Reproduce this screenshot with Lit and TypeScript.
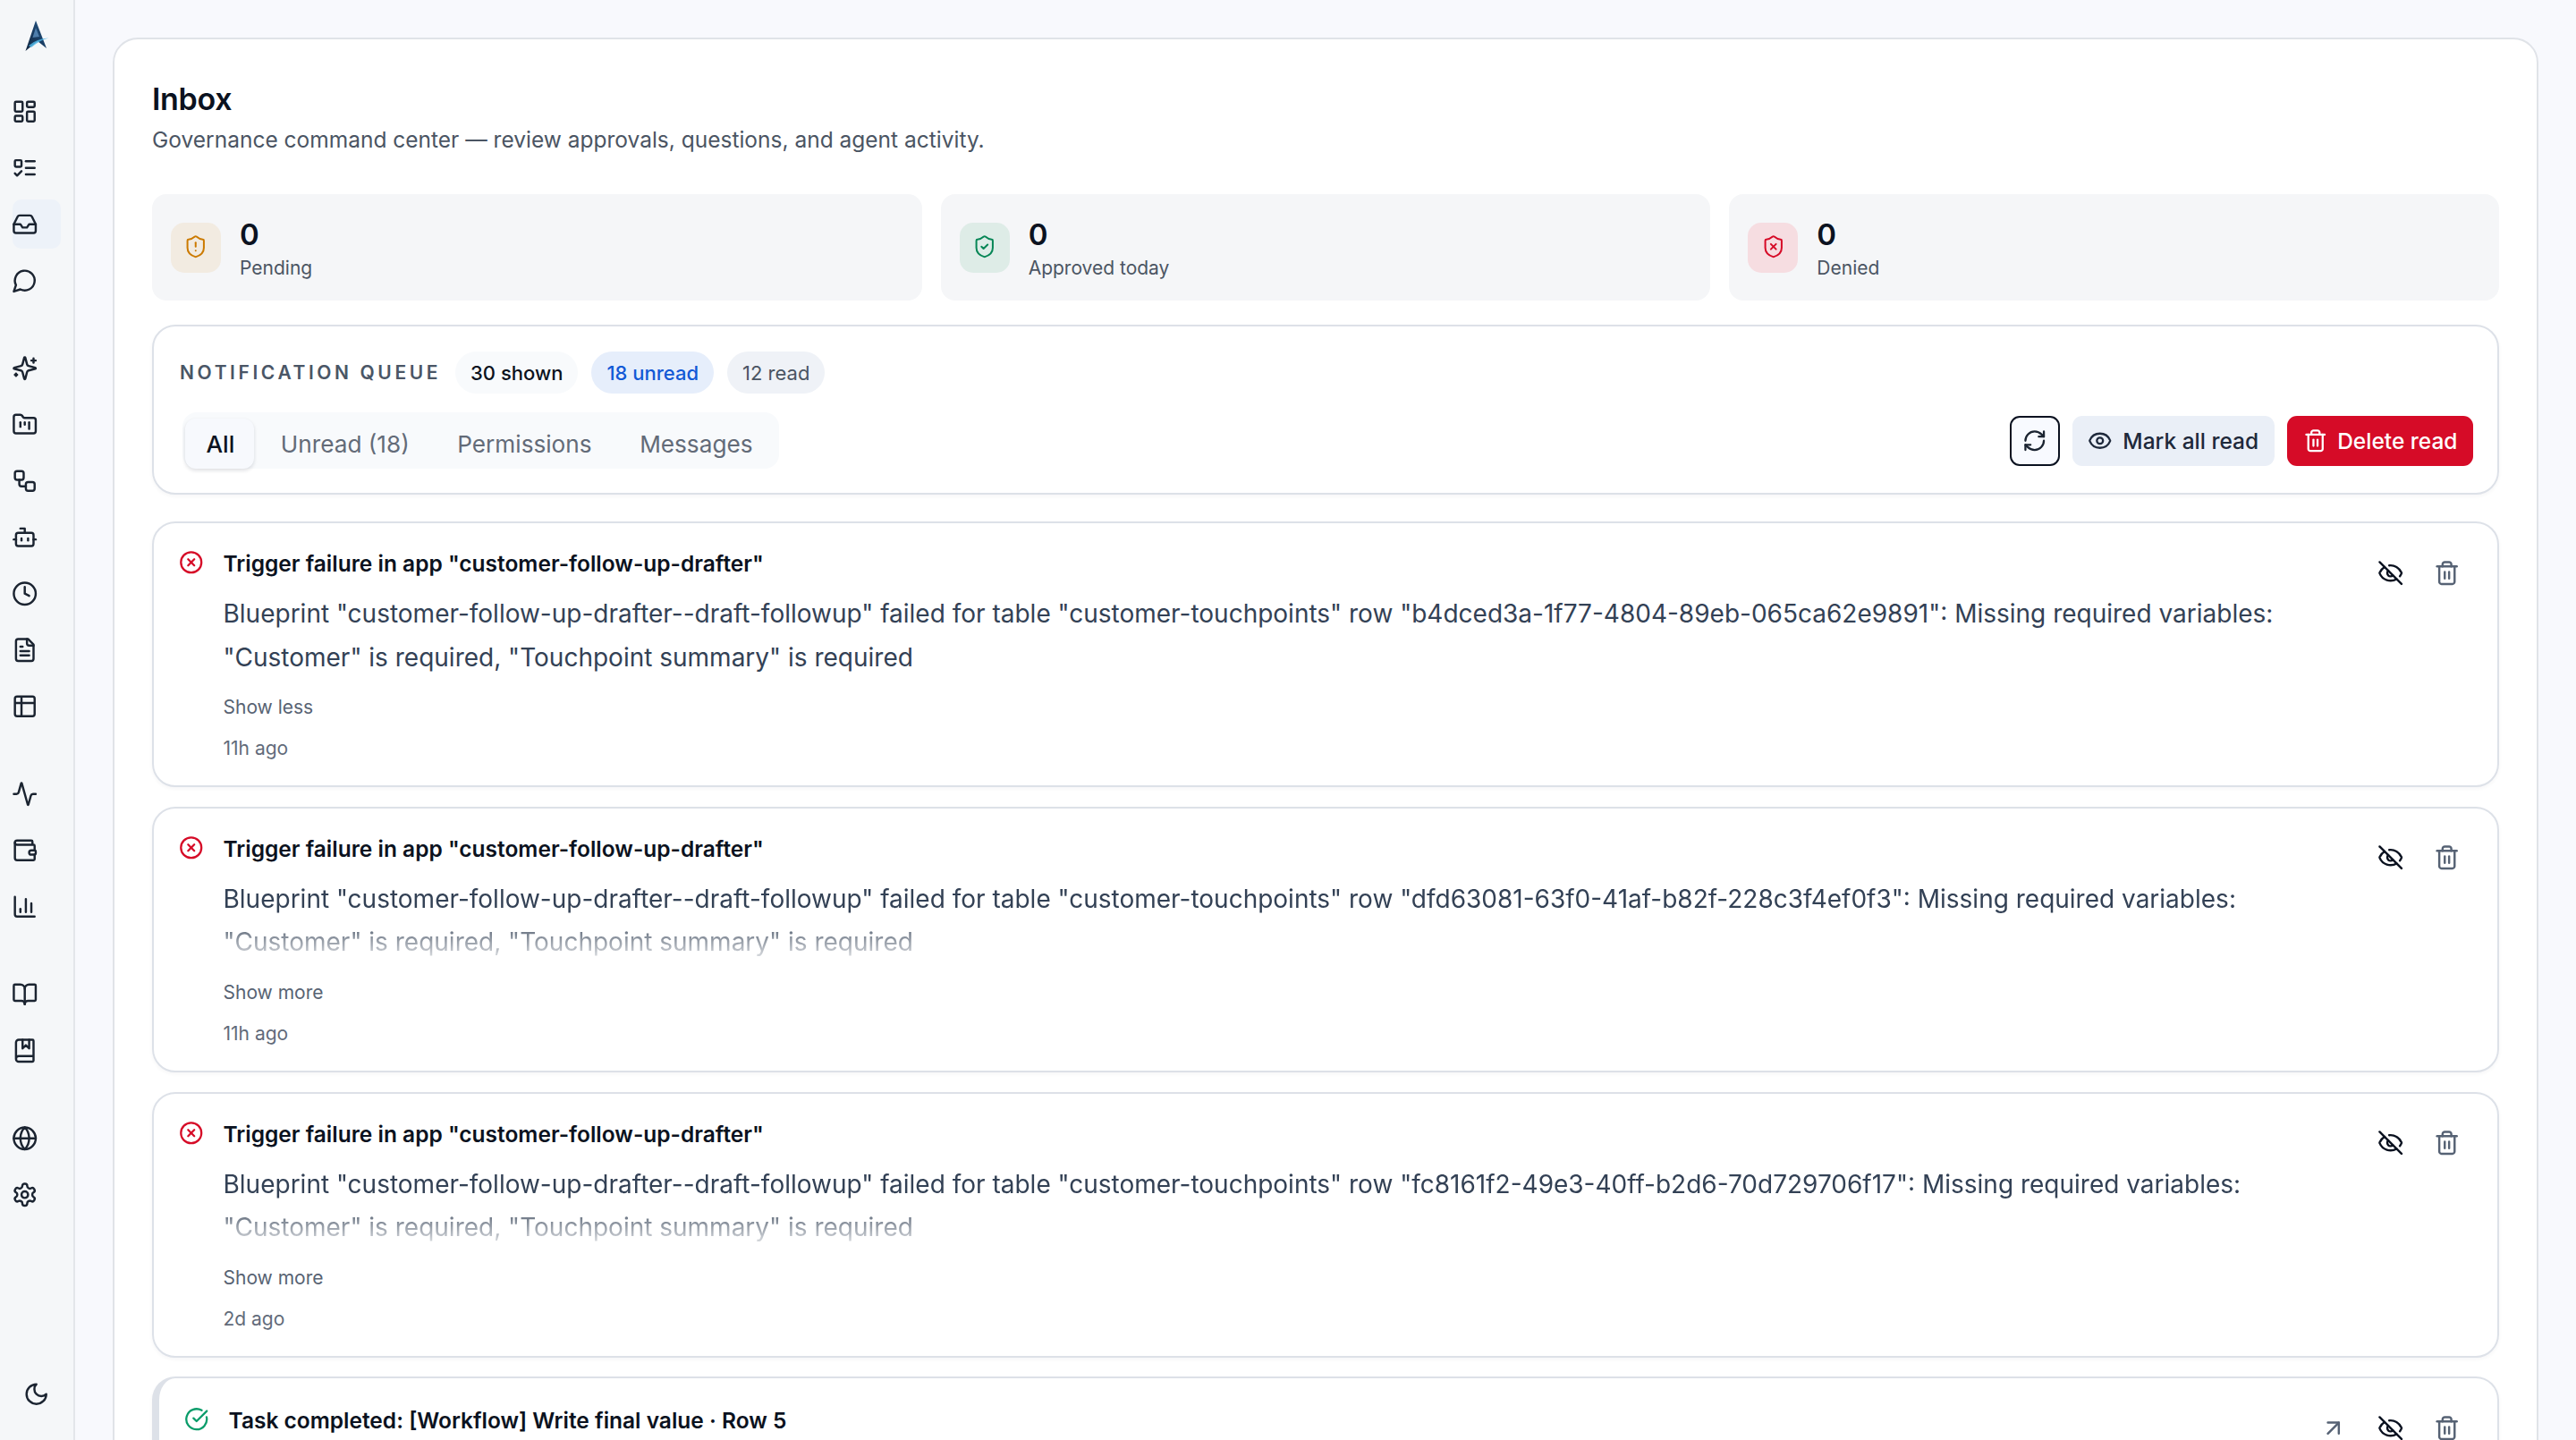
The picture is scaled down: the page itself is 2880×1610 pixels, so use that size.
import { LitElement, html, css, svg } from 'lit';
import { customElement } from 'lit/decorators.js';

const paths: Record<string, unknown> = {
  dashboard: svg`<rect x="3" y="3" width="7" height="9" rx="1"/><rect x="14" y="3" width="7" height="5" rx="1"/><rect x="14" y="12" width="7" height="9" rx="1"/><rect x="3" y="16" width="7" height="5" rx="1"/>`,
  todo: svg`<rect x="3" y="5" width="6" height="6" rx="1"/><path d="m3 17 2 2 4-4"/><path d="M13 6h8"/><path d="M13 12h8"/><path d="M13 18h8"/>`,
  inbox: svg`<polyline points="22 12 16 12 14 15 10 15 8 12 2 12"/><path d="M5.45 5.11 2 12v6a2 2 0 0 0 2 2h16a2 2 0 0 0 2-2v-6l-3.45-6.89A2 2 0 0 0 16.76 4H7.24a2 2 0 0 0-1.79 1.11z"/>`,
  chat: svg`<path d="M7.9 20A9 9 0 1 0 4 16.1L2 22Z"/>`,
  sparkles: svg`<path d="M9.937 15.5A2 2 0 0 0 8.5 14.063l-6.135-1.582a.5.5 0 0 1 0-.962L8.5 9.936A2 2 0 0 0 9.937 8.5l1.582-6.135a.5.5 0 0 1 .963 0L14.063 8.5A2 2 0 0 0 15.5 9.937l6.135 1.581a.5.5 0 0 1 0 .964L15.5 14.063a2 2 0 0 0-1.437 1.437l-1.582 6.135a.5.5 0 0 1-.963 0z"/><path d="M20 3v4"/><path d="M22 5h-4"/><path d="M4 17v2"/><path d="M5 18H3"/>`,
  folder: svg`<path d="M4 20h16a2 2 0 0 0 2-2V8a2 2 0 0 0-2-2h-7.93a2 2 0 0 1-1.66-.9l-.82-1.2A2 2 0 0 0 7.93 3H4a2 2 0 0 0-2 2v13c0 1.1.9 2 2 2Z"/><path d="M8 10v4"/><path d="M12 10v2"/><path d="M16 10v6"/>`,
  workflow: svg`<rect x="3" y="3" width="8" height="8" rx="2"/><path d="M7 11v4a2 2 0 0 0 2 2h4"/><rect x="13" y="13" width="8" height="8" rx="2"/>`,
  bot: svg`<path d="M12 8V4H8"/><rect x="4" y="8" width="16" height="12" rx="2"/><path d="M2 14h2"/><path d="M20 14h2"/><path d="M15 13v2"/><path d="M9 13v2"/>`,
  clock: svg`<circle cx="12" cy="12" r="10"/><polyline points="12 6 12 12 16 14"/>`,
  file: svg`<path d="M15 2H6a2 2 0 0 0-2 2v16a2 2 0 0 0 2 2h12a2 2 0 0 0 2-2V7Z"/><path d="M14 2v4a2 2 0 0 0 2 2h4"/><path d="M10 9H8"/><path d="M16 13H8"/><path d="M16 17H8"/>`,
  table: svg`<path d="M9 3H5a2 2 0 0 0-2 2v4m6-6h10a2 2 0 0 1 2 2v4M9 3v18m0 0h10a2 2 0 0 0 2-2V9M9 21H5a2 2 0 0 1-2-2V9m0 0h18"/>`,
  activity: svg`<path d="M22 12h-2.48a2 2 0 0 0-1.93 1.46l-2.35 8.36a.25.25 0 0 1-.48 0L9.24 2.18a.25.25 0 0 0-.48 0l-2.35 8.36A2 2 0 0 1 4.49 12H2"/>`,
  wallet: svg`<path d="M19 7V4a1 1 0 0 0-1-1H5a2 2 0 0 0 0 4h15a1 1 0 0 1 1 1v4h-3a2 2 0 0 0 0 4h3a1 1 0 0 0 1-1v-2a1 1 0 0 0-1-1"/><path d="M3 5v14a2 2 0 0 0 2 2h15a1 1 0 0 0 1-1v-4"/>`,
  chart: svg`<path d="M3 3v16a2 2 0 0 0 2 2h16"/><path d="M18 17V9"/><path d="M13 17V5"/><path d="M8 17v-3"/>`,
  book: svg`<path d="M12 7v14"/><path d="M3 18a1 1 0 0 1-1-1V4a1 1 0 0 1 1-1h5a4 4 0 0 1 4 4 4 4 0 0 1 4-4h5a1 1 0 0 1 1 1v13a1 1 0 0 1-1 1h-6a3 3 0 0 0-3 3 3 3 0 0 0-3-3z"/>`,
  bookmark: svg`<path d="M10 2v8l3-3 3 3V2"/><path d="M4 19.5v-15A2.5 2.5 0 0 1 6.5 2H19a1 1 0 0 1 1 1v18a1 1 0 0 1-1 1H6.5a1 1 0 0 1 0-5H20"/>`,
  globe: svg`<circle cx="12" cy="12" r="10"/><path d="M12 2a14.5 14.5 0 0 0 0 20 14.5 14.5 0 0 0 0-20"/><path d="M2 12h20"/>`,
  gear: svg`<path d="M12.22 2h-.44a2 2 0 0 0-2 2v.18a2 2 0 0 1-1 1.73l-.43.25a2 2 0 0 1-2 0l-.15-.08a2 2 0 0 0-2.73.73l-.22.38a2 2 0 0 0 .73 2.73l.15.1a2 2 0 0 1 1 1.72v.51a2 2 0 0 1-1 1.74l-.15.09a2 2 0 0 0-.73 2.73l.22.38a2 2 0 0 0 2.73.73l.15-.08a2 2 0 0 1 2 0l.43.25a2 2 0 0 1 1 1.73V20a2 2 0 0 0 2 2h.44a2 2 0 0 0 2-2v-.18a2 2 0 0 1 1-1.73l.43-.25a2 2 0 0 1 2 0l.15.08a2 2 0 0 0 2.73-.73l.22-.39a2 2 0 0 0-.73-2.73l-.15-.08a2 2 0 0 1-1-1.74v-.5a2 2 0 0 1 1-1.74l.15-.09a2 2 0 0 0 .73-2.73l-.22-.38a2 2 0 0 0-2.73-.73l-.15.08a2 2 0 0 1-2 0l-.43-.25a2 2 0 0 1-1-1.73V4a2 2 0 0 0-2-2z"/><circle cx="12" cy="12" r="3"/>`,
  moon: svg`<path d="M12 3a6 6 0 0 0 9 9 9 9 0 1 1-9-9Z"/>`,
  shieldAlert: svg`<path d="M20 13c0 5-3.5 7.5-7.66 8.95a1 1 0 0 1-.67-.01C7.5 20.5 4 18 4 13V6a1 1 0 0 1 1-1c2 0 4.5-1.2 6.24-2.72a1.17 1.17 0 0 1 1.52 0C14.51 3.81 17 5 19 5a1 1 0 0 1 1 1z"/><path d="M12 8v4"/><path d="M12 16h.01"/>`,
  shieldCheck: svg`<path d="M20 13c0 5-3.5 7.5-7.66 8.95a1 1 0 0 1-.67-.01C7.5 20.5 4 18 4 13V6a1 1 0 0 1 1-1c2 0 4.5-1.2 6.24-2.72a1.17 1.17 0 0 1 1.52 0C14.51 3.81 17 5 19 5a1 1 0 0 1 1 1z"/><path d="m9 12 2 2 4-4"/>`,
  shieldX: svg`<path d="M20 13c0 5-3.5 7.5-7.66 8.95a1 1 0 0 1-.67-.01C7.5 20.5 4 18 4 13V6a1 1 0 0 1 1-1c2 0 4.5-1.2 6.24-2.72a1.17 1.17 0 0 1 1.52 0C14.51 3.81 17 5 19 5a1 1 0 0 1 1 1z"/><path d="m14.5 9.5-5 5"/><path d="m9.5 9.5 5 5"/>`,
  refresh: svg`<path d="M3 12a9 9 0 0 1 9-9 9.75 9.75 0 0 1 6.74 2.74L21 8"/><path d="M21 3v5h-5"/><path d="M21 12a9 9 0 0 1-9 9 9.75 9.75 0 0 1-6.74-2.74L3 16"/><path d="M8 16H3v5"/>`,
  eye: svg`<path d="M2.062 12.348a1 1 0 0 1 0-.696 10.75 10.75 0 0 1 19.876 0 1 1 0 0 1 0 .696 10.75 10.75 0 0 1-19.876 0"/><circle cx="12" cy="12" r="3"/>`,
  eyeOff: svg`<path d="M10.733 5.076a10.744 10.744 0 0 1 11.205 6.575 1 1 0 0 1 0 .696 10.747 10.747 0 0 1-1.444 2.49"/><path d="M14.084 14.158a3 3 0 0 1-4.242-4.242"/><path d="M17.479 17.499a10.75 10.75 0 0 1-15.417-5.151 1 1 0 0 1 0-.696 10.75 10.75 0 0 1 4.446-5.143"/><path d="m2 2 20 20"/>`,
  trash: svg`<path d="M3 6h18"/><path d="M19 6v14c0 1-1 2-2 2H7c-1 0-2-1-2-2V6"/><path d="M8 6V4c0-1 1-2 2-2h4c1 0 2 1 2 2v2"/><line x1="10" x2="10" y1="11" y2="17"/><line x1="14" x2="14" y1="11" y2="17"/>`,
  circleX: svg`<circle cx="12" cy="12" r="10"/><path d="m15 9-6 6"/><path d="m9 9 6 6"/>`,
  circleCheck: svg`<path d="M21.801 10A10 10 0 1 1 17 3.335"/><path d="m9 11 3 3L22 4"/>`,
  arrow: svg`<path d="M7 7h10v10"/><path d="M7 17 17 7"/>`,
};

const icon = (name: string, cls = '') =>
  html`<svg class="ic ${cls}" viewBox="0 0 24 24" fill="none" stroke="currentColor" stroke-width="2" stroke-linecap="round" stroke-linejoin="round">${paths[name]}</svg>`;

const navGroups = [
  ['dashboard', 'todo', 'inbox', 'chat'],
  ['sparkles', 'folder', 'workflow', 'bot', 'clock', 'file', 'table'],
  ['activity', 'wallet', 'chart'],
  ['book', 'bookmark'],
  ['globe', 'gear'],
];

const notifications = [
  { row: 'b4dced3a-1f77-4804-89eb-065ca62e9891', age: '11h ago', open: true },
  { row: 'dfd63081-63f0-41af-b82f-228c3f4ef0f3', age: '11h ago', open: false },
  { row: 'fc8161f2-49e3-40ff-b2d6-70d729706f17', age: '2d ago', open: false },
];

@customElement('app-root')
export class AppRoot extends LitElement {
  static styles = css`
    :host {
      display: block;
      height: 1610px;
      overflow: hidden;
      font-family: 'Inter', 'Liberation Sans', sans-serif;
      color: #0b1220;
      background: #f8f9fd;
    }
    .shell {
      display: flex;
      height: 1610px;
    }
    .ic {
      display: block;
      width: 29.4px;
      height: 29.4px;
      flex: none;
    }
    .side {
      width: 84px;
      flex: none;
      box-sizing: border-box;
      background: #f5f7f9;
      border-right: 2.5px solid #e3e6ea;
      display: flex;
      flex-direction: column;
      align-items: flex-start;
      color: #1b2431;
    }
    .logo {
      display: block;
      width: 44px;
      height: 50px;
      margin: 15px 0 0 20px;
    }
    .nav {
      display: flex;
      flex-direction: column;
      gap: 43px;
      margin-top: 32px;
      margin-left: 14px;
    }
    .group {
      display: flex;
      flex-direction: column;
      gap: 8px;
    }
    .item {
      width: 54px;
      height: 55px;
      display: flex;
      align-items: center;
      border-radius: 10px;
    }
    .item .ic {
      margin-left: -0.7px;
    }
    .item.active {
      background: #edf2f9;
    }
    .moon {
      margin: auto 0 37px 26.3px;
    }
    .main {
      flex: 1;
      min-width: 0;
      padding: 42px 42px 0 42px;
    }
    .page {
      box-sizing: border-box;
      background: #fff;
      border: 2px solid #e0e3e8;
      border-radius: 28px;
      padding: 45px 42px 0;
      height: 1700px;
    }
    h1 {
      margin: 0;
      font-size: 34px;
      line-height: 44px;
      font-weight: 600;
      letter-spacing: -0.3px;
    }
    .sub {
      margin: 4px 0 0;
      font-size: 24.5px;
      line-height: 38px;
      color: #4b5563;
    }
    .stats {
      display: grid;
      grid-template-columns: repeat(3, 1fr);
      gap: 21px;
      margin-top: 42px;
    }
    .stat {
      height: 119px;
      box-sizing: border-box;
      background: #f5f6f8;
      border-radius: 16px;
      padding: 0 21px;
      display: flex;
      align-items: center;
      gap: 21px;
    }
    .stat-ic {
      width: 56px;
      height: 56px;
      border-radius: 15px;
      display: flex;
      align-items: center;
      justify-content: center;
    }
    .stat-ic .ic {
      width: 27.5px;
      height: 27.5px;
      stroke-width: 1.75;
      margin-top: -2px;
    }
    .stat-ic.amber { background: #f2ebe1; color: #cc7a00; }
    .stat-ic.green { background: #deece7; color: #078656; }
    .stat-ic.red { background: #f6dde1; color: #d60b27; }
    .stat-val {
      font-size: 33px;
      line-height: 40px;
      font-weight: 600;
      margin-top: 5px;
    }
    .stat-lbl {
      font-size: 21px;
      line-height: 32px;
      color: #4b5563;
      margin-top: 2.5px;
    }
    .panel {
      margin-top: 27px;
      box-sizing: border-box;
      height: 190px;
      border: 2px solid #dde1e8;
      border-radius: 26px;
      padding: 28px 27.5px 0 29px;
      box-shadow: 0 2px 4px rgba(15, 23, 42, 0.04);
      display: flex;
      justify-content: space-between;
      align-items: flex-end;
    }
    .panel-left {
      display: flex;
      flex-direction: column;
      align-self: flex-start;
    }
    .queue {
      display: flex;
      align-items: center;
      gap: 15px;
    }
    .queue-title {
      font-size: 21px;
      font-weight: 600;
      letter-spacing: 3.6px;
      color: #4a5666;
      margin-right: 1px;
    }
    .chip {
      height: 47px;
      padding: 0 17px;
      border-radius: 24px;
      display: flex;
      align-items: center;
      font-size: 22px;
      font-weight: 500;
      background: #f8fafc;
      color: #0b1220;
    }
    .chip.blue { background: #e6eefb; color: #1259d6; }
    .chip.gray { background: #eff2f7; color: #4b5563; font-weight: 400; }
    .tabs {
      display: flex;
      gap: 5.5px;
      margin: 21px 0 0 3px;
      height: 63px;
      box-sizing: border-box;
      padding: 7px 5px 0 3px;
      background: #f8fafc;
      border-radius: 16px;
      align-self: flex-start;
    }
    .tab {
      padding: 0 24px;
      display: flex;
      align-items: center;
      font-size: 26.2px;
      color: #636b78;
      border-radius: 12px;
    }
    .tab.on {
      background: #f7f9fd;
      color: #0b1220;
      font-weight: 500;
      padding: 0 22px 0 23.5px;
      box-shadow: 0 2px 4px rgba(15, 23, 42, 0.14);
    }
    .tools {
      display: flex;
      gap: 14px;
      margin-bottom: 30px;
    }
    .btn {
      height: 56px;
      box-sizing: border-box;
      border: none;
      border-radius: 11px;
      display: flex;
      align-items: center;
      gap: 11.5px;
      padding: 0 18px 0 17.5px;
      font-family: inherit;
      font-size: 24.5px;
      font-weight: 500;
    }
    .btn .ic {
      width: 27.5px;
      height: 27.5px;
    }
    .btn.icon-only {
      width: 56px;
      padding: 0;
      justify-content: center;
      background: #f8faff;
      border: 2.5px solid #0b1220;
      color: #1b2431;
    }
    .btn.soft { background: #eaeff7; color: #1e293b; }
    .btn.danger { background: #d60b27; color: #fff; gap: 11px; padding-right: 17px; }
    .list {
      display: flex;
      flex-direction: column;
      gap: 21.8px;
      margin-top: 30px;
    }
    .note {
      box-sizing: border-box;
      height: 297px;
      border: 2px solid #dde1e8;
      border-radius: 26px;
      padding: 27px 29px 0 28px;
      box-shadow: 0 2px 4px rgba(15, 23, 42, 0.04);
      display: flex;
      gap: 22px;
    }
    .note.task {
      border-left-width: 8px;
      padding-top: 29px;
    }
    .note-ic {
      margin-top: 3px;
      width: 27.5px;
      height: 27.5px;
    }
    .note-ic.err { color: #d60b27; }
    .note-ic.ok { color: #0a9c6a; }
    .note-body {
      flex: 1;
      min-width: 0;
    }
    .note-title {
      font-size: 24.5px;
      line-height: 36px;
      font-weight: 600;
    }
    .note-text {
      margin-top: 14px;
      font-size: 28px;
      line-height: 48.5px;
      color: #334155;
    }
    .note-text.clip {
      -webkit-mask-image: linear-gradient(to bottom, #000 45%, rgba(0, 0, 0, 0.05) 100%);
      mask-image: linear-gradient(to bottom, #000 45%, rgba(0, 0, 0, 0.05) 100%);
    }
    .more {
      margin-top: 17px;
      font-size: 21px;
      line-height: 30px;
      color: #586373;
    }
    .age {
      margin-top: 16px;
      font-size: 21px;
      line-height: 30px;
      color: #626b7a;
    }
    .acts {
      display: flex;
      align-items: center;
      align-self: flex-start;
      gap: 34px;
      margin: 13.5px 12.5px 0 0;
      color: #566274;
    }
    .note.task .acts {
      margin-top: 11.5px;
    }
    .acts .hide { color: #0b1220; }
  `;

  private note(n: (typeof notifications)[number]) {
    return html`
      <div class="note">
        ${icon('circleX', 'note-ic err')}
        <div class="note-body">
          <div class="note-title">Trigger failure in app "customer-follow-up-drafter"</div>
          <div class="note-text ${n.open ? '' : 'clip'}">
            Blueprint "customer-follow-up-drafter--draft-followup" failed for table "customer-touchpoints" row "${n.row}": Missing required variables: "Customer" is required, "Touchpoint summary" is required
          </div>
          <div class="more">${n.open ? 'Show less' : 'Show more'}</div>
          <div class="age">${n.age}</div>
        </div>
        <div class="acts">${icon('eyeOff', 'hide')}${icon('trash')}</div>
      </div>
    `;
  }

  render() {
    return html`
      <div class="shell">
        <aside class="side">
          <svg class="logo" viewBox="0 0 44 50">
            <defs>
              <linearGradient id="lg" x1="0" y1="1" x2="1" y2="0">
                <stop offset="0" stop-color="#12263f"/>
                <stop offset="0.55" stop-color="#1a3f66"/>
                <stop offset="1" stop-color="#2b5f8f"/>
              </linearGradient>
            </defs>
            <path d="M20 8 L32 39 L22 31 L8.5 42 Z" fill="url(#lg)"/>
            <path d="M20 16 L24 26 L16.5 27 Z" fill="#5b8fbe" opacity="0.8"/>
            <path d="M12 36 Q21 28 34.5 27.5 Q24 30 15 38 Z" fill="#4fb4e4" opacity="0.85"/>
          </svg>
          <nav class="nav">
            ${navGroups.map(
              (g) => html`<div class="group">
                ${g.map((n) => html`<div class="item ${n === 'inbox' ? 'active' : ''}">${icon(n)}</div>`)}
              </div>`,
            )}
          </nav>
          ${icon('moon', 'moon')}
        </aside>
        <main class="main">
          <section class="page">
            <h1>Inbox</h1>
            <p class="sub">Governance command center — review approvals, questions, and agent activity.</p>
            <div class="stats">
              <div class="stat">
                <div class="stat-ic amber">${icon('shieldAlert')}</div>
                <div><div class="stat-val">0</div><div class="stat-lbl">Pending</div></div>
              </div>
              <div class="stat">
                <div class="stat-ic green">${icon('shieldCheck')}</div>
                <div><div class="stat-val">0</div><div class="stat-lbl">Approved today</div></div>
              </div>
              <div class="stat">
                <div class="stat-ic red">${icon('shieldX')}</div>
                <div><div class="stat-val">0</div><div class="stat-lbl">Denied</div></div>
              </div>
            </div>
            <div class="panel">
              <div class="panel-left">
                <div class="queue">
                  <span class="queue-title">NOTIFICATION QUEUE</span>
                  <span class="chip">30 shown</span>
                  <span class="chip blue">18 unread</span>
                  <span class="chip gray">12 read</span>
                </div>
                <div class="tabs">
                  <div class="tab on">All</div>
                  <div class="tab">Unread (18)</div>
                  <div class="tab">Permissions</div>
                  <div class="tab">Messages</div>
                </div>
              </div>
              <div class="tools">
                <button class="btn icon-only">${icon('refresh')}</button>
                <button class="btn soft">${icon('eye')}Mark all read</button>
                <button class="btn danger">${icon('trash')}Delete read</button>
              </div>
            </div>
            <div class="list">
              ${notifications.map((n) => this.note(n))}
              <div class="note task">
                ${icon('circleCheck', 'note-ic ok')}
                <div class="note-body">
                  <div class="note-title">Task completed: [Workflow] Write final value · Row 5</div>
                </div>
                <div class="acts">${icon('arrow')}${icon('eyeOff', 'hide')}${icon('trash')}</div>
              </div>
            </div>
          </section>
        </main>
      </div>
    `;
  }
}
